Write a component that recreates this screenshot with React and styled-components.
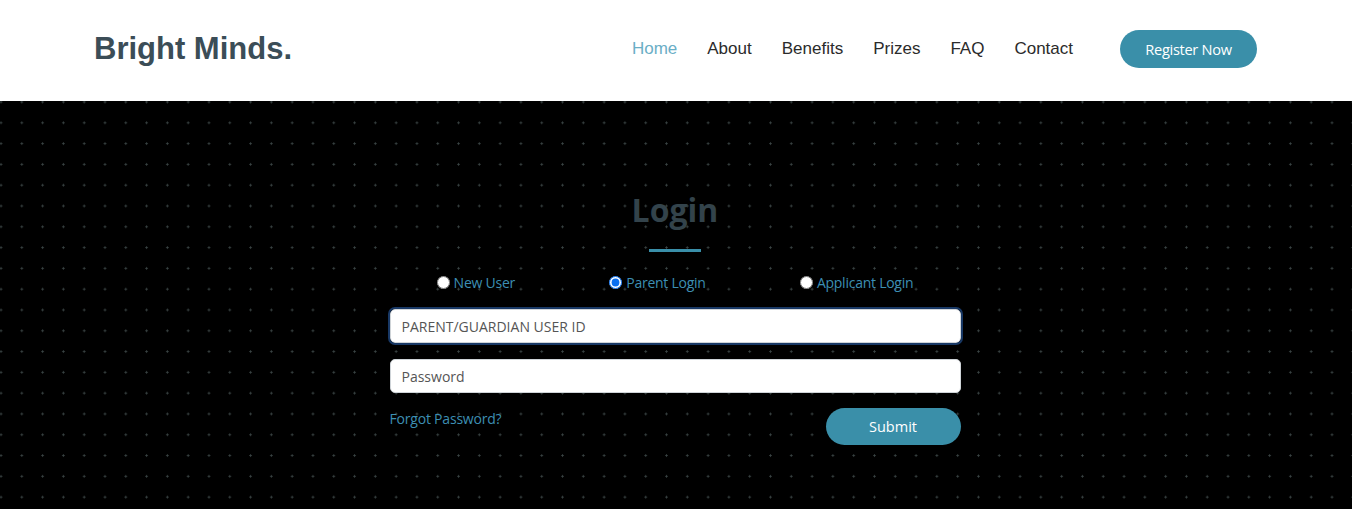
import React from 'react';
import styled, { createGlobalStyle } from 'styled-components';

const GlobalStyle = createGlobalStyle`
  html, body {
    margin: 0;
    padding: 0;
    background: #000;
  }
  * { box-sizing: border-box; }
`;

const Page = styled.div`
  width: 100%;
  height: 509px;
  display: flex;
  flex-direction: column;
  overflow: hidden;
`;

const Header = styled.header`
  height: 101px;
  background: #fff;
  display: flex;
  align-items: center;
  justify-content: space-between;
  padding: 0 95px 0 94px;
  flex-shrink: 0;
`;

const Logo = styled.h1`
  margin: 0 0 4px;
  font-family: "Liberation Sans", Arial, sans-serif;
  font-weight: 700;
  font-size: 31px;
  color: #3b4d57;
`;

const Nav = styled.nav`
  display: flex;
  align-items: center;
  margin-bottom: 4px;
`;

const NavLink = styled.a`
  font-family: "Liberation Sans", Arial, sans-serif;
  font-size: 17px;
  color: ${(props) => (props.active ? '#6aaec6' : '#2b2b2b')};
  text-decoration: none;
  margin-right: 30px;
`;

const RegisterButton = styled.button`
  margin-left: 17px;
  width: 137px;
  height: 38px;
  border: none;
  border-radius: 19px;
  background: #3a8fa9;
  color: #fff;
  font-family: "Open Sans", sans-serif;
  font-size: 14.6px;
  letter-spacing: -0.3px;
`;

const Main = styled.main`
  flex: 1;
  background-color: #000;
  background-image: radial-gradient(circle, #3b4545 0.9px, transparent 1.3px);
  background-size: 20.8px 20.8px;
  background-position: -9.4px -9.4px;
  display: flex;
  flex-direction: column;
  align-items: center;
  padding: 88px 2px 0 0;
`;

const Title = styled.h2`
  margin: 0;
  line-height: 42px;
  font-family: "Open Sans", sans-serif;
  font-weight: 700;
  font-size: 32px;
  color: #33434b;
`;

const Underline = styled.div`
  width: 52px;
  height: 3px;
  margin-top: 18px;
  background: #3a8fa9;
`;

const Form = styled.form`
  width: 571px;
  margin-top: 20px;
  display: flex;
  flex-direction: column;
`;

const RadioRow = styled.div`
  display: flex;
  justify-content: space-around;
  height: 20px;
  margin-bottom: 17px;
`;

const RadioLabel = styled.label`
  display: flex;
  align-items: center;
  font-family: "Open Sans", sans-serif;
  font-size: 14px;
  color: #3d8fb3;
  letter-spacing: -0.25px;
`;

const Radio = styled.input`
  margin: 0 4px 0 0;
  width: 13px;
  height: 13px;
  accent-color: #0a6ff0;
`;

const Field = styled.input`
  height: 34px;
  width: 100%;
  border-radius: 5px;
  border: 1px solid #cfd4d8;
  background: #fff;
  padding: 0 11px;
  font-family: "Open Sans", sans-serif;
  font-size: 14px;
  color: #333;
  outline: ${(props) => (props.focused ? '2px solid #183865' : 'none')};
  outline-offset: 0;
  margin-bottom: ${(props) => (props.focused ? '16px' : '15px')};
  &::placeholder {
    color: #555;
  }
`;

const FooterRow = styled.div`
  display: flex;
  justify-content: space-between;
  align-items: flex-start;
`;

const ForgotLink = styled.a`
  font-family: "Open Sans", sans-serif;
  font-size: 14px;
  color: #3d8fb3;
  text-decoration: none;
  margin-top: 1px;
  letter-spacing: -0.2px;
`;

const SubmitButton = styled.button`
  width: 135px;
  height: 37px;
  border: none;
  border-radius: 19px;
  background: #3a8fa9;
  color: #fff;
  font-family: "Open Sans", sans-serif;
  font-size: 14.5px;
`;

const navItems = ['Home', 'About', 'Benefits', 'Prizes', 'FAQ', 'Contact'];

export default function App() {
  return (
    <Page>
      <GlobalStyle />
      <Header>
        <Logo>Bright Minds.</Logo>
        <Nav>
          {navItems.map((item) => (
            <NavLink key={item} href="#" active={item === 'Home' ? 1 : 0}>
              {item}
            </NavLink>
          ))}
          <RegisterButton type="button">Register Now</RegisterButton>
        </Nav>
      </Header>
      <Main>
        <Title>Login</Title>
        <Underline />
        <Form onSubmit={(e) => e.preventDefault()}>
          <RadioRow>
            <RadioLabel>
              <Radio type="radio" name="role" />
              New User
            </RadioLabel>
            <RadioLabel>
              <Radio type="radio" name="role" defaultChecked />
              Parent Login
            </RadioLabel>
            <RadioLabel>
              <Radio type="radio" name="role" />
              Applicant Login
            </RadioLabel>
          </RadioRow>
          <Field focused placeholder="PARENT/GUARDIAN USER ID" />
          <Field type="password" placeholder="Password" />
          <FooterRow>
            <ForgotLink href="#">Forgot Password?</ForgotLink>
            <SubmitButton type="submit">Submit</SubmitButton>
          </FooterRow>
        </Form>
      </Main>
    </Page>
  );
}
